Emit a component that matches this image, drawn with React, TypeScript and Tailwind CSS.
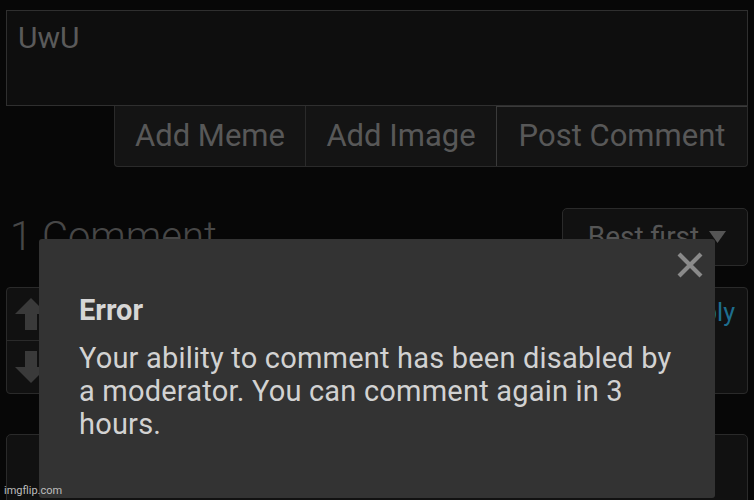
import React from "react";

export default function App() {
  return (
    <div className="relative w-[754px] h-[500px] overflow-hidden bg-[#070707]" style={{ fontFamily: "Roboto, 'Noto Sans', sans-serif" }}>
      <div className="flex flex-col pl-[6px] pr-[6px] pt-[10px]">
        {/* textarea */}
        <div className="h-[96px] border border-[#2f2f2f] bg-[#0e0e0e] px-[11px] pt-[10px] text-[30px] leading-[34px] text-[#5a5a5a]">
          UwU
        </div>
        {/* buttons */}
        <div className="flex justify-end">
          <div className="flex h-[61px] rounded-b-[4px] border-x border-b border-[#2a2a2a] bg-[#141414] text-[31px] text-[#585858]">
            <div className="flex w-[191px] items-center justify-center border-r border-[#2a2a2a]">Add Meme</div>
            <div className="flex w-[191px] items-center justify-center border-r border-[#3a3a3a]">Add Image</div>
            <div className="flex w-[250px] items-center justify-center border-t border-[#3a3a3a]">Post Comment</div>
          </div>
        </div>
        {/* comments header */}
        <div className="mt-[41px] flex items-start justify-between">
          <div className="pl-[4px] pt-[5px] text-[40px] font-light leading-[48px] text-[#474747]">1 Comment</div>
          <div className="flex h-[58px] w-[186px] items-center justify-center gap-[10px] rounded-[5px] border border-[#2a2a2a] bg-[#111] pl-[4px] text-[28px] text-[#555]">
            <span>Best first</span>
            <svg width="17" height="12" viewBox="0 0 17 12"><path d="M0 0 L17 0 L8.5 12 Z" fill="#555" /></svg>
          </div>
        </div>
        {/* comment row */}
        <div className="mt-[21px] flex gap-[10px]">
          <div className="flex h-[107px] w-[50px] flex-col rounded-[4px] border border-[#2a2a2a] bg-[#111]">
            <div className="flex h-[53px] items-center justify-center border-b border-[#2a2a2a]">
              <svg width="40" height="40" viewBox="0 0 40 40"><path d="M20 4 L36 20 L26 20 L26 36 L14 36 L14 20 L4 20 Z" fill="#3a3a3a" /></svg>
            </div>
            <div className="flex flex-1 items-center justify-center">
              <svg width="40" height="40" viewBox="0 0 40 40"><path d="M20 36 L36 20 L26 20 L26 4 L14 4 L14 20 L4 20 Z" fill="#3a3a3a" /></svg>
            </div>
          </div>
          <div className="relative h-[107px] flex-1 rounded-[4px] border border-[#2a2a2a] bg-[#111]">
            <span className="absolute right-[12px] top-[6px] text-[25px] text-[#1e6e8e]">Reply</span>
          </div>
        </div>
        <div className="mt-[40px] h-[80px] rounded-[5px] border border-[#2a2a2a] bg-[#111]" />
      </div>

      {/* modal */}
      <div className="absolute left-[39px] top-[239px] h-[259px] w-[676px] rounded-[3px] bg-[#333333] pl-[40px] pt-[52px]">
        <svg className="absolute right-[12px] top-[13px]" width="26" height="26" viewBox="0 0 26 26">
          <path d="M2 2 L24 24 M24 2 L2 24" stroke="#8a8a8a" strokeWidth="4.2" />
        </svg>
        <div className="text-[29px] font-bold leading-[38px] text-[#d6d6d6]">Error</div>
        <div className="mt-[13px] w-[606px] text-[29px] leading-[33px] tracking-[0.2px] text-[#d2d2d2]">
          Your ability to comment has been disabled by a moderator. You can comment again in 3 hours.
        </div>
      </div>

      <div className="absolute bottom-[3px] left-[4px] text-[11px] leading-[13px] text-[#bdbdbd]">imgflip.com</div>
    </div>
  );
}
